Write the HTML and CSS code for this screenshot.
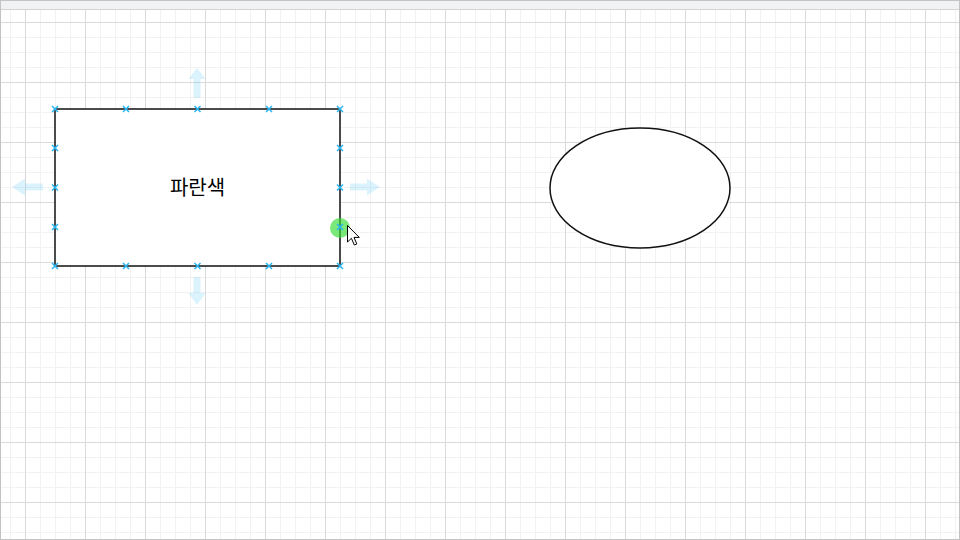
FILE: index.html
```html
<!DOCTYPE html>
<html lang="ko">
<head>
<meta charset="utf-8">
<title>Diagram</title>
<link rel="stylesheet" href="styles.css">
</head>
<body>
<div class="stage">
  <div class="frame">
    <div class="toolbar"></div>
    <div class="canvas"></div>
  </div>
  <svg class="overlay" width="960" height="540" viewBox="0 0 960 540" xmlns="http://www.w3.org/2000/svg">
    <g class="hint-arrows">
      <path d="M197,68 L205.5,79 L200.5,79 L200.5,98 L193.5,98 L193.5,79 L188.5,79 Z"/>
      <path d="M197,305 L205.5,293 L200.5,293 L200.5,277 L193.5,277 L193.5,293 L188.5,293 Z"/>
      <path d="M12,187 L25,178.5 L25,183.5 L43,183.5 L43,190.5 L25,190.5 L25,195.5 Z"/>
      <path d="M380,187 L367,178.5 L367,183.5 L350,183.5 L350,190.5 L367,190.5 L367,195.5 Z"/>
    </g>
    <rect class="shape" x="55" y="109" width="285" height="157"/>
    <text class="label" x="197.5" y="194.5" text-anchor="middle">파란색</text>
    <ellipse class="shape" cx="640" cy="188" rx="90" ry="60"/>
    <circle class="hover-dot" cx="340" cy="228" r="10"/>
    <g class="handles">
      <path d="M52,106 l6,6 m0,-6 l-6,6"/>
      <path d="M123,106 l6,6 m0,-6 l-6,6"/>
      <path d="M194.5,106 l6,6 m0,-6 l-6,6"/>
      <path d="M266,106 l6,6 m0,-6 l-6,6"/>
      <path d="M337,106 l6,6 m0,-6 l-6,6"/>
      <path d="M52,145 l6,6 m0,-6 l-6,6"/>
      <path d="M52,184.5 l6,6 m0,-6 l-6,6"/>
      <path d="M52,224 l6,6 m0,-6 l-6,6"/>
      <path d="M337,145 l6,6 m0,-6 l-6,6"/>
      <path d="M337,184.5 l6,6 m0,-6 l-6,6"/>
      <path d="M337,224 l6,6 m0,-6 l-6,6"/>
      <path d="M52,263 l6,6 m0,-6 l-6,6"/>
      <path d="M123,263 l6,6 m0,-6 l-6,6"/>
      <path d="M194.5,263 l6,6 m0,-6 l-6,6"/>
      <path d="M266,263 l6,6 m0,-6 l-6,6"/>
      <path d="M337,263 l6,6 m0,-6 l-6,6"/>
    </g>
    <path class="cursor" d="M347.5,225.5 L347.5,242 L351.4,238.3 L354.3,245 L356.8,244 L354,237.4 L359.3,237.4 Z"/>
  </svg>
</div>
</body>
</html>
```
FILE: styles.css
```css
html, body {
  margin: 0;
  padding: 0;
  background: #ffffff;
  font-family: "Noto Sans CJK KR", "Noto Sans", sans-serif;
}

.stage {
  position: relative;
  width: 960px;
  height: 540px;
  overflow: hidden;
}

.frame {
  box-sizing: border-box;
  width: 960px;
  height: 540px;
  border: 1px solid #c3c3c3;
  display: flex;
  flex-direction: column;
}

.toolbar {
  height: 8px;
  flex: 0 0 8px;
  background: #f1f2f4;
  border-bottom: 1px solid #d3d3d3;
}

.canvas {
  flex: 1;
  background-color: #ffffff;
  background-image:
    linear-gradient(to right, #dadada 1px, transparent 1px),
    linear-gradient(to bottom, #dadada 1px, transparent 1px),
    linear-gradient(to right, #f2f2f2 1px, transparent 1px),
    linear-gradient(to bottom, #f2f2f2 1px, transparent 1px);
  background-size: 60px 60px, 60px 60px, 15px 15px, 15px 15px;
  background-position: 24px 12px, 24px 12px, 9px 12px, 9px 12px;
}

.overlay {
  position: absolute;
  left: 0;
  top: 0;
}

.hint-arrows path {
  fill: #29b6f2;
  fill-opacity: 0.17;
}

.shape {
  fill: #ffffff;
  stroke: #111111;
  stroke-width: 1.5;
}

.label {
  font-family: "Noto Sans CJK KR", "Noto Sans", sans-serif;
  font-size: 20px;
  fill: #000000;
}

.hover-dot {
  fill: #33dd33;
  fill-opacity: 0.65;
}

.handles path {
  fill: none;
  stroke: #29b6f2;
  stroke-width: 1.5;
}

.cursor {
  fill: #ffffff;
  stroke: #000000;
  stroke-width: 1;
  stroke-linejoin: round;
}
```
